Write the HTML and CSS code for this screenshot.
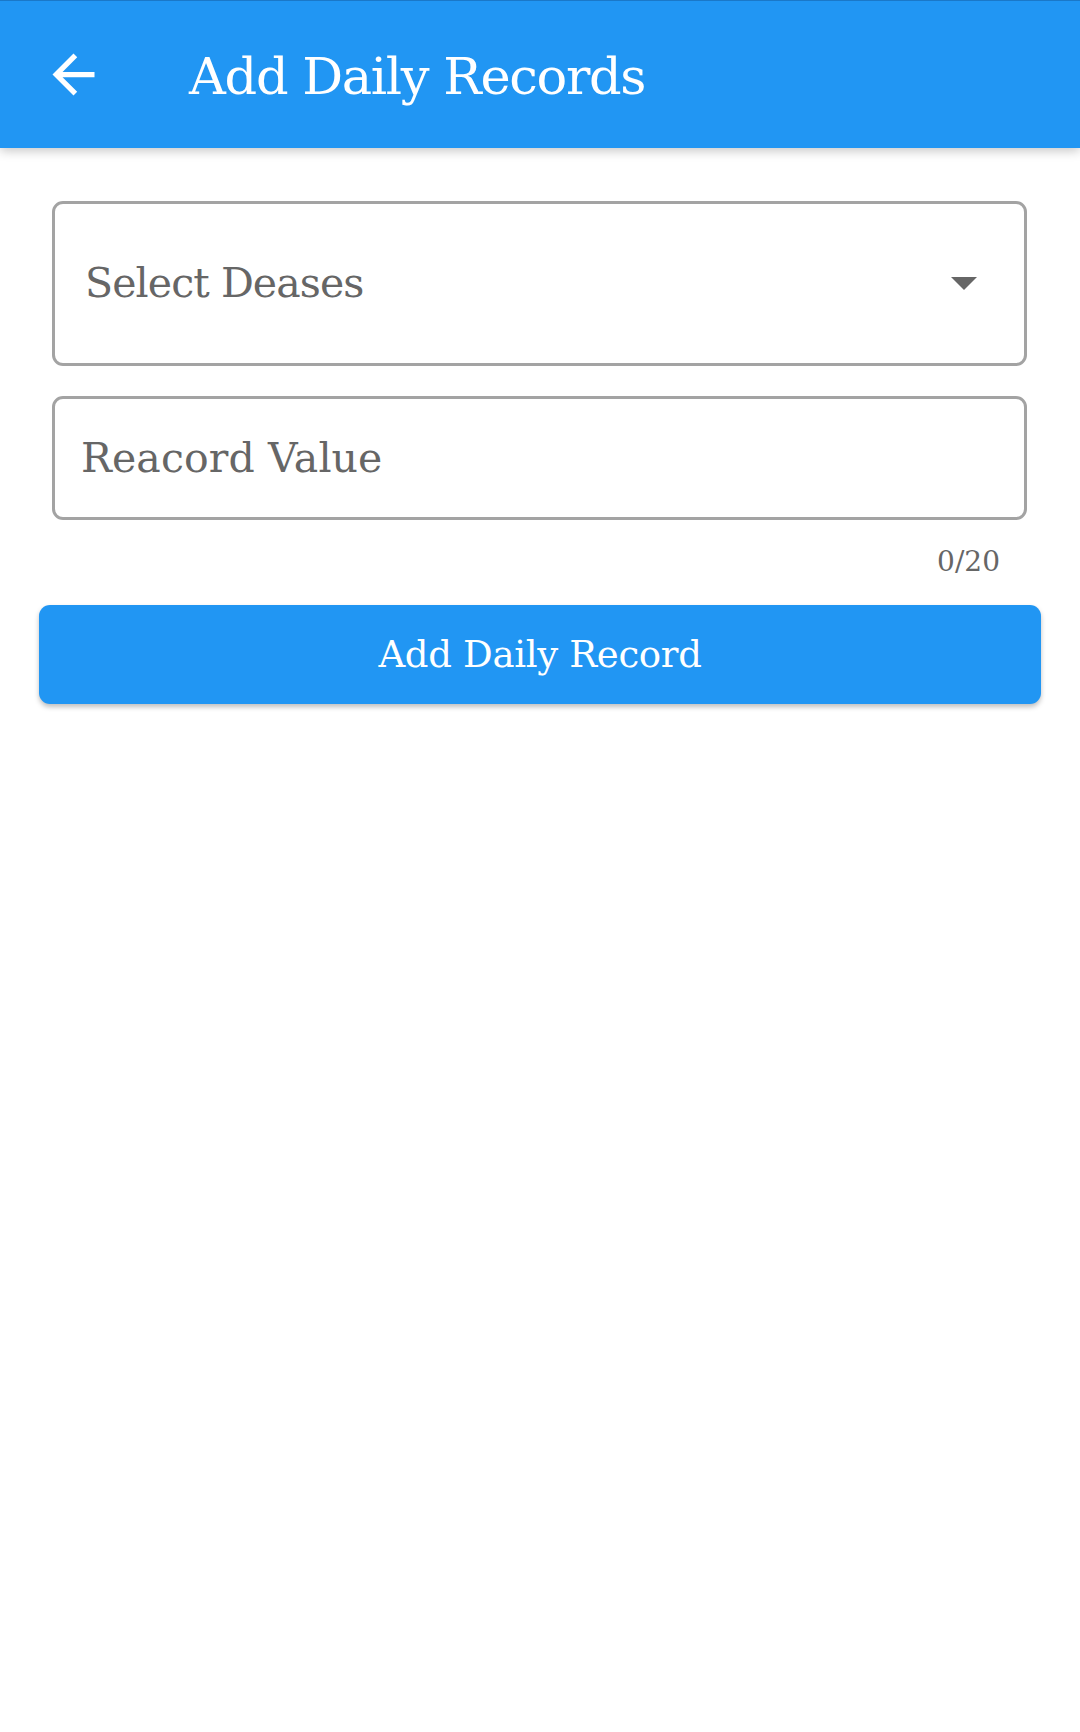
FILE: index.html
```html
<!DOCTYPE html>
<html lang="en">
<head>
<meta charset="utf-8">
<title>Add Daily Records</title>
<link rel="stylesheet" href="styles.css">
</head>
<body>
<header class="appbar">
  <button class="back" aria-label="Back">
    <svg width="63" height="63" viewBox="0 0 24 24"><path fill="#fff" d="M20 11H7.83l5.59-5.59L12 4l-8 8 8 8 1.41-1.41L7.83 13H20v-2z"/></svg>
  </button>
  <h1 class="title">Add Daily Records</h1>
</header>
<main class="form">
  <div class="field field-select">
    <span class="placeholder select-text">Select Deases</span>
    <svg class="caret" width="26" height="13" viewBox="7 10 10 5"><path fill="#666" d="M7 10l5 5 5-5z"/></svg>
  </div>
  <div class="field field-input">
    <span class="placeholder input-text">Reacord Value</span>
  </div>
  <div class="counter">0/20</div>
  <button class="submit">Add Daily Record</button>
</main>
</body>
</html>
```
FILE: styles.css
```css
* { box-sizing: border-box; }
html, body { margin: 0; padding: 0; background: #fff; }
body { font-family: "DejaVu Serif", "Liberation Serif", serif; width: 1080px; height: 1732px; overflow: hidden; }

.appbar {
  height: 148px;
  background: #2196f3;
  border-top: 1px solid #1a78c8;
  display: flex;
  align-items: center;
  box-shadow: 0 3px 10px rgba(0,0,0,0.22);
  position: relative;
  z-index: 1;
}
.back {
  background: none; border: 0; padding: 0;
  margin-left: 42px;
  width: 63px; height: 63px;
  display: flex;
}
.title {
  margin: 0 0 0 84px;
  padding-top: 4px;
  font-weight: normal;
  font-size: 51px;
  letter-spacing: -1.3px;
  line-height: 1;
  color: #fff;
}

.form { display: flex; flex-direction: column; padding-top: 53px; }
.field {
  margin: 0 53px 0 52px;
  border: 3px solid #a3a3a3;
  border-radius: 11px;
  display: flex;
  align-items: center;
}
.field-select { height: 165px; padding-left: 30px; padding-right: 47px; justify-content: space-between; }
.field-input { height: 124px; margin-top: 30px; padding-left: 26px; }
.placeholder { font-size: 41px; line-height: 1; color: #666; }
.select-text { letter-spacing: -0.9px; }
.input-text { letter-spacing: 0.1px; }
.counter {
  margin: 24px 80px 0 0;
  text-align: right;
  font-size: 28px;
  line-height: 36px;
  color: #666;
}
.submit {
  margin: 25px 39px 0 39px;
  height: 99px;
  background: #2196f3;
  border: 0;
  border-radius: 11px;
  color: #fff;
  font-family: inherit;
  font-size: 37px;
  letter-spacing: -0.3px;
  line-height: 1;
  box-shadow: 0 3px 5px rgba(0,0,0,0.25);
}
```
